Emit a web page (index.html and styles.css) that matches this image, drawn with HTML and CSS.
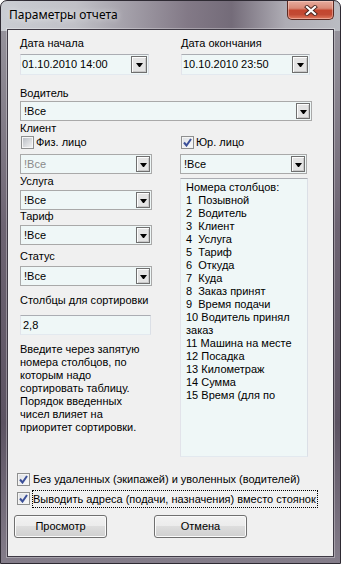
FILE: index.html
```html
<!DOCTYPE html>
<html>
  <head>
    <meta charset="UTF-8"/>
    <link rel="stylesheet" href="styles.css">
  </head>
  <body>
    <div class="window">
      <div class="titlebar">
        <span class="title">Параметры отчета</span>
        <div class="close">
          <svg width="14" height="11" viewBox="0 0 14 11">
            <path d="M3 2 L11 9 M11 2 L3 9" stroke="#4a2620" stroke-width="4" stroke-linecap="square"/>
            <path d="M3 2 L11 9 M11 2 L3 9" stroke="#ffffff" stroke-width="2.2" stroke-linecap="square"/>
          </svg>
        </div>
      </div>
      <div class="client">
        <div class="dates">
          <div class="date-field">
            <div class="label">Дата начала</div>
            <div class="picker"><span class="value">01.10.2010 14:00</span><span class="drop"></span></div>
          </div>
          <div class="date-field">
            <div class="label">Дата окончания</div>
            <div class="picker"><span class="value">10.10.2010 23:50</span><span class="drop"></span></div>
          </div>
        </div>
        <div class="label label-driver">Водитель</div>
        <div class="combo combo-wide"><span class="value">!Все</span><span class="drop"></span></div>
        <div class="label label-client">Клиент</div>
        <div class="columns">
          <div class="col-left">
            <div class="check"><span class="box"></span><span>Физ. лицо</span></div>
            <div class="combo disabled"><span class="value">!Все</span><span class="drop"></span></div>
            <div class="label label-service">Услуга</div>
            <div class="combo combo-service"><span class="value">!Все</span><span class="drop"></span></div>
            <div class="label">Тариф</div>
            <div class="combo combo-tariff"><span class="value">!Все</span><span class="drop"></span></div>
            <div class="label label-status">Статус</div>
            <div class="combo combo-status"><span class="value">!Все</span><span class="drop"></span></div>
            <div class="label label-sort">Столбцы для сортировки</div>
            <div class="textbox">2,8</div>
            <p class="hint">Введите через запятую<br>номера столбцов, по<br>которым надо<br>сортировать таблицу.<br>Порядок введенных<br>чисел влияет на<br>приоритет сортировки.</p>
          </div>
          <div class="col-right">
            <div class="check"><span class="box checked"><svg width="9" height="9" viewBox="0 0 9 9"><path d="M1 4.5 L3.5 7.5 L8 1" fill="none" stroke="#3b4f98" stroke-width="2"/></svg></span><span>Юр. лицо</span></div>
            <div class="combo combo-legal"><span class="value">!Все</span><span class="drop"></span></div>
            <div class="listbox">Номера столбцов:
1  Позывной
2  Водитель
3  Клиент
4  Услуга
5  Тариф
6  Откуда
7  Куда
8  Заказ принят
9  Время подачи
10 Водитель принял
заказ
11 Машина на месте
12 Посадка
13 Километраж
14 Сумма
15 Время (для по</div>
          </div>
        </div>
        <div class="check check-bottom"><span class="box checked"><svg width="9" height="9" viewBox="0 0 9 9"><path d="M1 4.5 L3.5 7.5 L8 1" fill="none" stroke="#3b4f98" stroke-width="2"/></svg></span><span>Без удаленных (экипажей) и уволенных (водителей)</span></div>
        <div class="check check-bottom check-second"><span class="box checked"><svg width="9" height="9" viewBox="0 0 9 9"><path d="M1 4.5 L3.5 7.5 L8 1" fill="none" stroke="#3b4f98" stroke-width="2"/></svg></span><span class="focus">Выводить адреса (подачи, назначения) вместо стоянок</span></div>
        <div class="buttons">
          <button class="btn">Просмотр</button>
          <button class="btn">Отмена</button>
        </div>
      </div>
    </div>
  </body>
</html>
```

FILE: styles.css
```css
body
{
  margin: 0;
  background: #fff;
  font-family: "Liberation Sans", Arial, sans-serif;
  font-size: 11px;
  line-height: 13px;
  color: #000;
}
.window
{
  box-sizing: border-box;
  width: 341px;
  height: 564px;
  border: 1px solid #2e2a33;
  border-radius: 7px 7px 0 0;
  display: flex;
  flex-direction: column;
  background:
    linear-gradient(to right, rgba(205,208,214,.95) 0%, rgba(196,197,203,.9) 22%, rgba(128,118,132,.9) 55%, rgba(112,103,117,.9) 68%, rgba(176,174,182,.95) 84%, rgba(186,188,194,1) 100%) 0 0 / 100% 30px no-repeat,
    linear-gradient(to bottom, #9c9aa2 0%, #6d6472 40%, #5c5362 75%, #847d8a 100%);
}
.titlebar
{
  height: 28px;
  display: flex;
  align-items: flex-start;
}
.title
{
  font-family: "Noto Sans", sans-serif;
  font-size: 12px;
  line-height: 16px;
  margin: 6px 0 0 8px;
  text-shadow: 0 0 6px rgba(255,255,255,.9);
}
.close
{
  box-sizing: border-box;
  margin-left: auto;
  margin-right: 6px;
  width: 47px;
  height: 19px;
  border: 1px solid #5c2a22;
  border-top: none;
  border-radius: 0 0 5px 5px;
  background: linear-gradient(#e7ab9d 0%, #d98a77 40%, #c4462f 52%, #c24a34 75%, #e07a5f 100%);
  box-shadow: inset 0 0 0 1px rgba(255,220,210,.45);
  display: flex;
  align-items: center;
  justify-content: center;
}
.client
{
  flex: 1;
  margin: 0 6px 6px 6px;
  border: 1px solid #3f3a45;
  background: #f0f0f0;
  padding: 7px 0 0 12px;
  box-shadow: 0 0 0 1px rgba(255,255,255,.3);
}
.label
{
  height: 13px;
  white-space: nowrap;
}
.dates
{
  display: flex;
  gap: 32px;
}
.date-field
{
  width: 129px;
}
.picker,
.combo,
.textbox
{
  box-sizing: border-box;
  display: flex;
  align-items: stretch;
  background: #eff7f7;
  border: 1px solid;
  border-color: #abadb3 #dbdfe6 #e3e9ef #e2e3ea;
}
.picker
{
  height: 21px;
  margin-top: 4px;
}
.combo
{
  height: 20px;
  width: 132px;
  border-color: #a9a9a9;
}
.value
{
  flex: 1;
  padding-left: 3px;
  align-self: center;
  white-space: nowrap;
}
.picker .value
{
  padding-left: 1px;
}
.drop
{
  box-sizing: border-box;
  width: 14px;
  margin: 1px 1px 1px 0;
  border: 1px solid #6f6f6f;
  background: #e4e4e4;
  box-shadow: inset 1px 1px #fdfdfd, inset -1px -1px #c9c9c9;
  display: flex;
  align-items: center;
  justify-content: center;
}
.picker .drop
{
  width: 16px;
}
.drop::after
{
  content: "";
  width: 1px;
  height: 0;
  border-left: 3px solid transparent;
  border-right: 3px solid transparent;
  border-top: 4px solid #000;
  margin-top: 1px;
}
.label-driver
{
  margin-top: 12px;
}
.combo-wide
{
  width: 292px;
  margin-top: 1px;
}
.label-client
{
  margin-top: 1px;
}
.columns
{
  display: flex;
  gap: 28px;
  margin-top: 1px;
}
.col-left
{
  width: 132px;
}
.col-right
{
  width: 128px;
}
.check
{
  display: flex;
  align-items: center;
  gap: 2px;
  height: 13px;
  white-space: nowrap;
}
.box
{
  box-sizing: border-box;
  width: 13px;
  height: 13px;
  margin-left: 1px;
  border: 1px solid #8e8f8f;
  padding: 1px;
  background: linear-gradient(135deg, #bcc0c6, #f1f1f1) content-box, #f6f6f6;
  display: flex;
  align-items: center;
  justify-content: center;
}
.box.checked
{
  padding: 0;
  background: linear-gradient(135deg, #dcdfe3, #fbfbfb);
  box-shadow: inset 0 0 0 1px #f4f4f4;
}
.col-left .combo,
.col-right .combo
{
  margin-top: 5px;
}
.disabled .value
{
  color: #8a8a8a;
}
.combo-legal
{
  width: 127px;
}
.col-left .label-service
{
  margin-top: 1px;
}
.col-left .combo-service
{
  margin-top: 2px;
}
.col-left .combo-tariff
{
  margin-top: 2px;
}
.label-status
{
  margin-top: 5px;
}
.col-left .combo-status
{
  margin-top: 3px;
}
.label-sort
{
  margin-top: 8px;
}
.textbox
{
  height: 20px;
  width: 131px;
  margin-top: 8px;
  padding-left: 2px;
  align-items: center;
}
.hint
{
  margin: 8px 0 0 0;
  white-space: nowrap;
}
.listbox
{
  box-sizing: border-box;
  height: 279px;
  margin-top: 4px;
  padding: 2px 0 0 5px;
  background: #eff7f7;
  border: 1px solid;
  border-color: #abadb3 #dbdfe6 #e3e9ef #e2e3ea;
  white-space: pre;
  overflow: hidden;
}
.check-bottom
{
  margin-left: -4px;
  margin-top: 16px;
  gap: 3px;
}
.check-second
{
  margin-top: 6px;
}
.focus
{
  outline: 1px dotted #000;
  padding: 2px 1px 1px 0;
}
.buttons
{
  display: flex;
  gap: 47px;
  margin: 10px 0 0 -6px;
}
.btn
{
  width: 93px;
  height: 23px;
  border: 1px solid #707070;
  border-radius: 3px;
  background: linear-gradient(#f2f2f2 0%, #ebebeb 50%, #dddddd 50%, #cfcfcf 100%);
  box-shadow: inset 0 0 0 1px #fbfbfb;
  font: inherit;
  color: #000;
  padding: 0;
}
```
